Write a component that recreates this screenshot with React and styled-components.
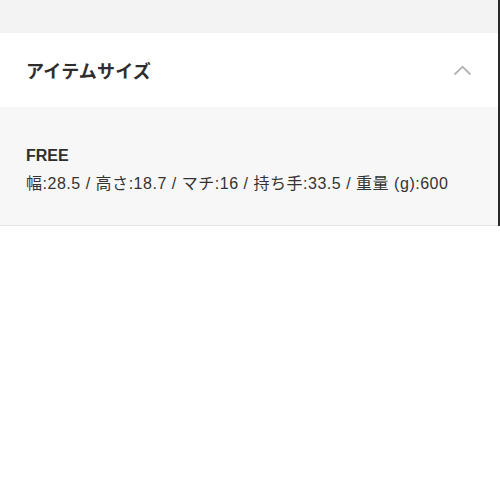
import React from 'react';
import styled, { createGlobalStyle } from 'styled-components';

const GlobalStyle = createGlobalStyle`
  html, body {
    margin: 0;
    padding: 0;
    background: #ffffff;
  }
  body {
    font-family: "Liberation Sans", "Noto Sans CJK JP", sans-serif;
    color: #333333;
  }
`;

const Page = styled.div`
  width: 500px;
  height: 500px;
  background: #ffffff;
`;

const Panel = styled.div`
  border-right: 2px solid #2a2a2a;
`;

const TopBand = styled.div`
  height: 33px;
  background: #f3f3f3;
`;

const Header = styled.div`
  height: 74px;
  background: #ffffff;
  display: flex;
  align-items: center;
  justify-content: space-between;
  padding: 0 26px;
  box-sizing: border-box;
`;

const Title = styled.h2`
  margin: 0;
  font-family: "Noto Sans CJK JP", sans-serif;
  font-size: 18px;
  font-weight: 700;
  letter-spacing: 0.2px;
  color: #2e2e2e;
`;

const Chevron = styled.svg`
  width: 19px;
  height: 11px;
`;

const Body = styled.div`
  background: #f7f7f7;
  padding: 39px 26px 0;
  height: 119px;
  box-sizing: border-box;
  border-bottom: 1px solid #e6e6e6;
`;

const SizeName = styled.div`
  font-size: 16px;
  font-weight: 700;
  line-height: 20px;
  color: #2e2e2e;
`;

const SizeDetail = styled.div`
  margin-top: 8px;
  font-size: 16px;
  line-height: 20px;
  letter-spacing: 0.52px;
  color: #333333;
`;

export default function App() {
  return (
    <Page>
      <GlobalStyle />
      <Panel>
        <TopBand />
        <Header>
          <Title>アイテムサイズ</Title>
          <Chevron viewBox="0 0 19 11" fill="none">
            <path d="M1.5 9.5 L9.5 1.8 L17.5 9.5" stroke="#b4b4b4" strokeWidth="1.8" />
          </Chevron>
        </Header>
        <Body>
          <SizeName>FREE</SizeName>
          <SizeDetail>幅:28.5 / 高さ:18.7 / マチ:16 / 持ち手:33.5 / 重量 (g):600</SizeDetail>
        </Body>
      </Panel>
    </Page>
  );
}
